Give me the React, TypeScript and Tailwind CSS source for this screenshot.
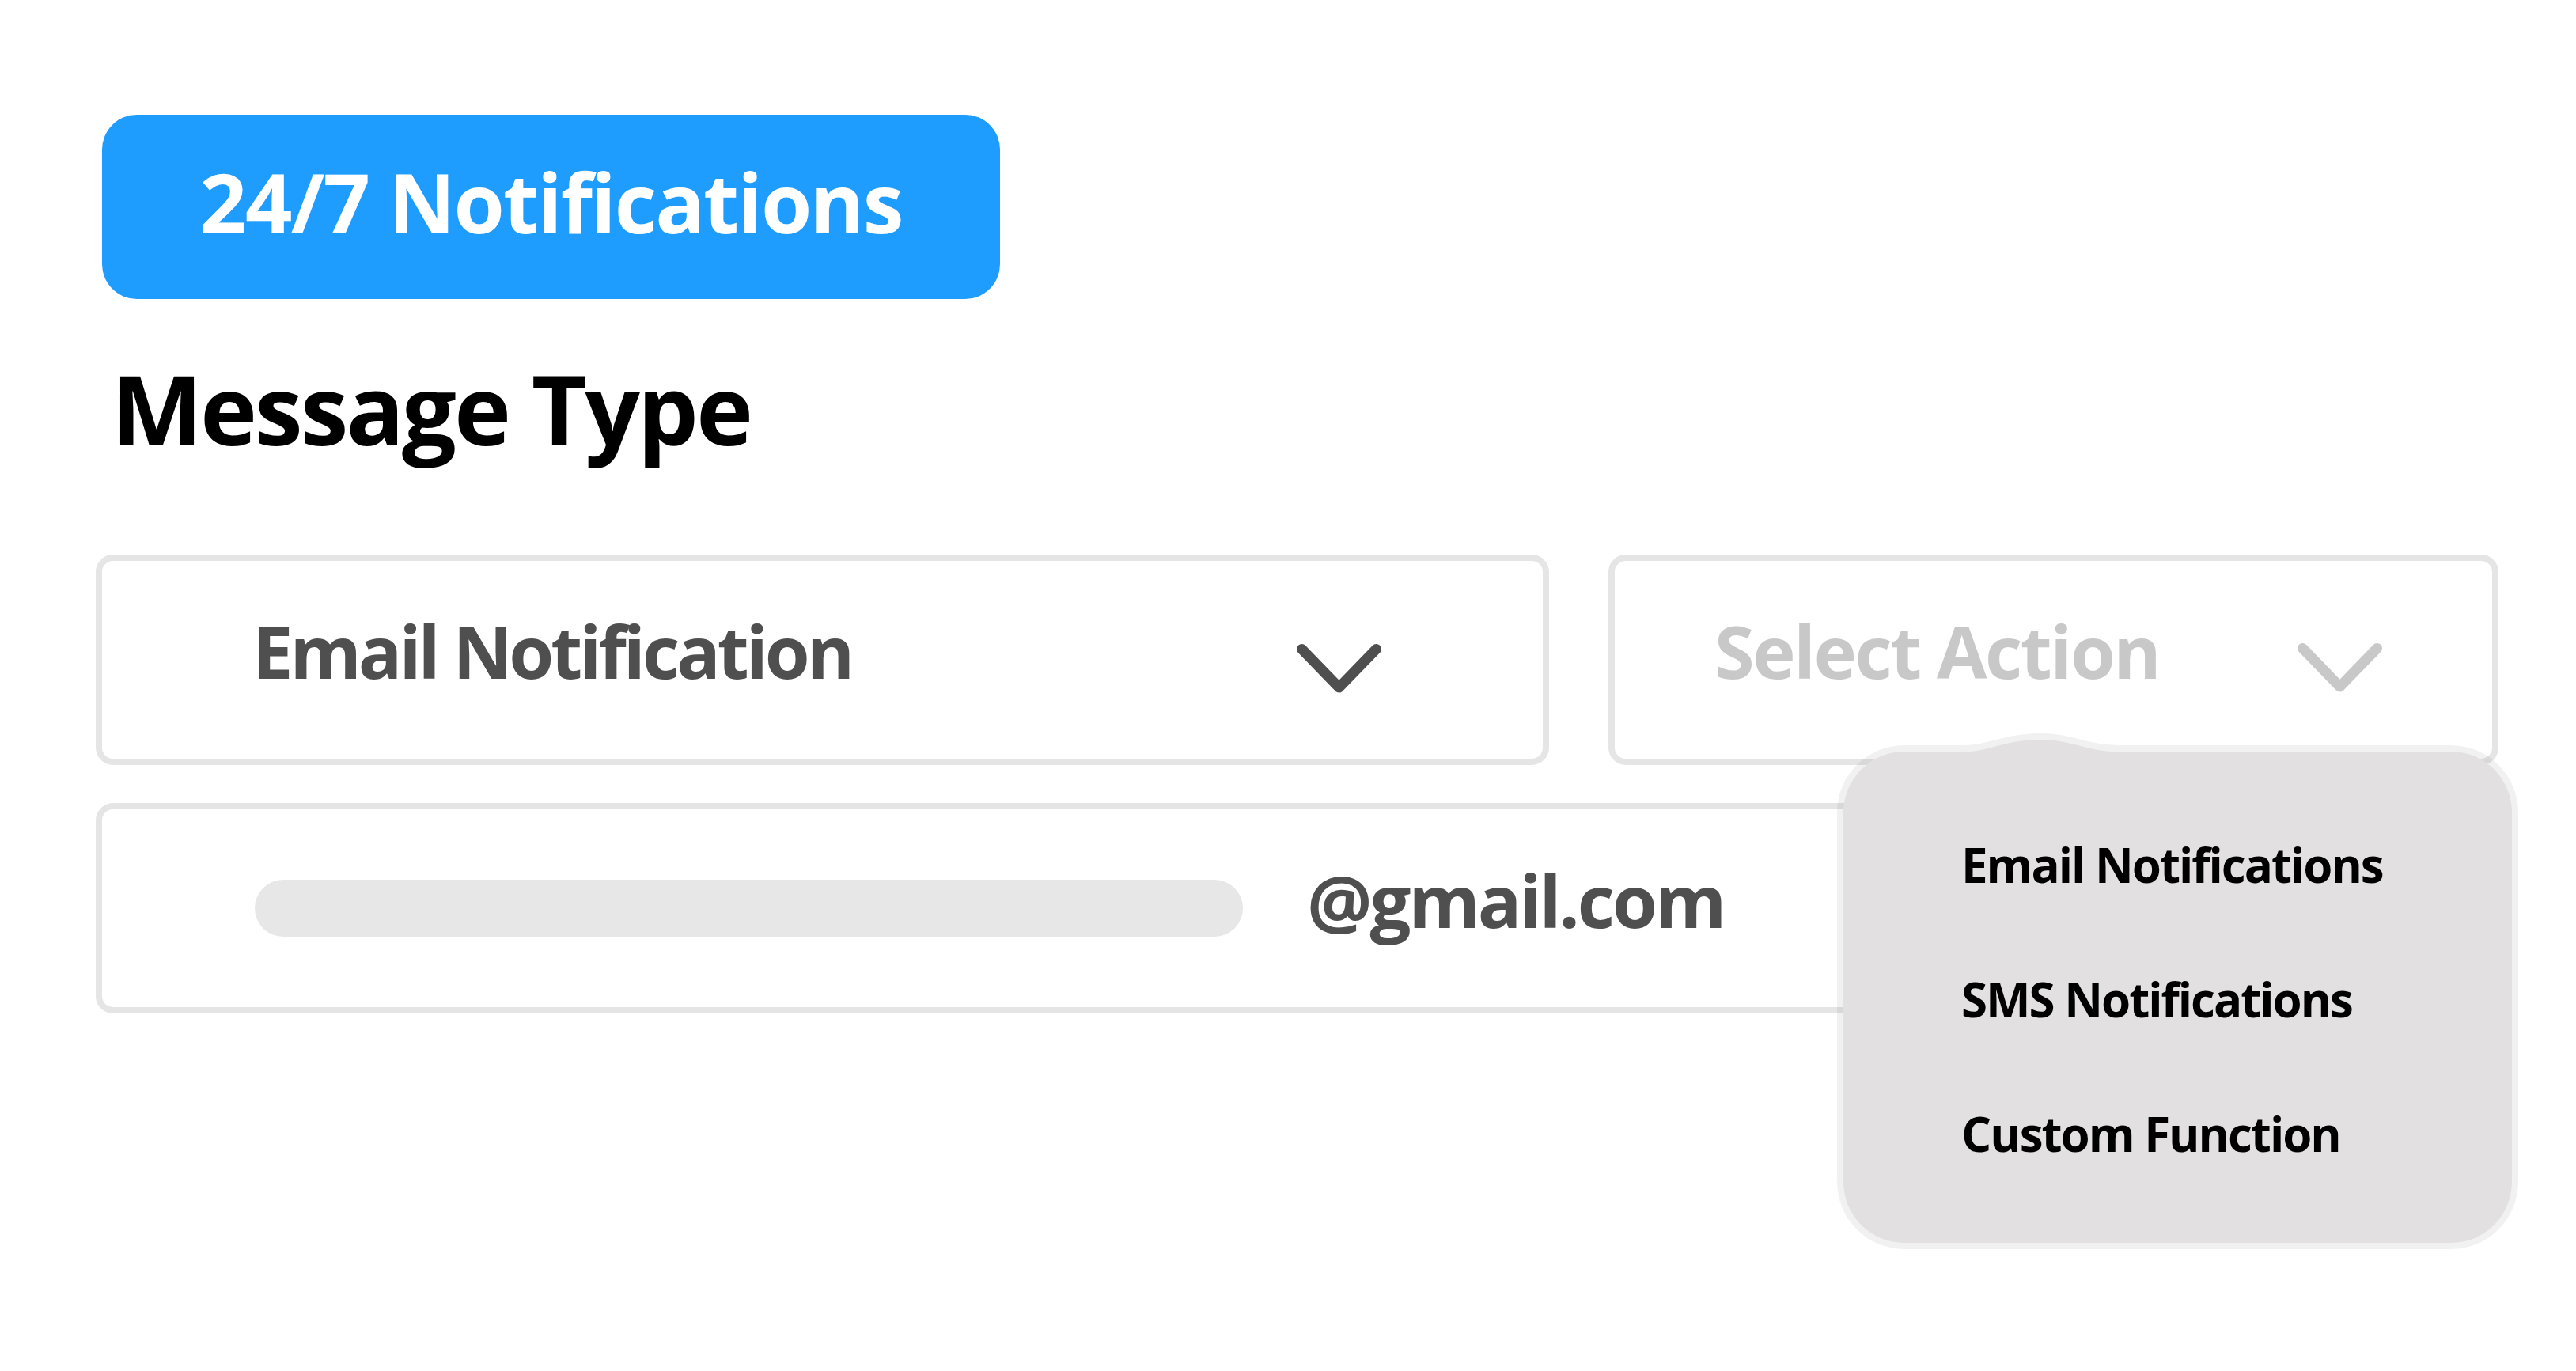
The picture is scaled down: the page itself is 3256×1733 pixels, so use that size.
import React from "react";

function Chevron({ color }: { color: string }) {
  return (
    <svg width="107" height="62" viewBox="0 0 107 62" fill="none">
      <path
        d="M6.5 6.5 L53.5 55 L100.5 6.5"
        stroke={color}
        strokeWidth="13"
        strokeLinecap="round"
        strokeLinejoin="round"
      />
    </svg>
  );
}

const menuItems = ["Email Notifications", "SMS Notifications", "Custom Function"];

export default function App() {
  return (
    <div className="min-h-screen bg-white font-['Open_Sans',sans-serif]">
      <div className="relative ml-[121px] w-[3037px] pt-[145px]">
        {/* badge */}
        <div className="ml-[8px] flex h-[233px] w-[1135px] items-center justify-center rounded-[44px] bg-[#1e9dff] pb-[13px]">
          <span className="text-[104px] font-bold leading-none tracking-[-2px] text-white">
            24/7 Notifications
          </span>
        </div>

        <h1 className="ml-[20px] mt-[77px] text-[122px] font-bold leading-none tracking-[-3px] text-black">
          Message Type
        </h1>

        {/* selects */}
        <div className="mt-[124px] flex gap-[75px]">
          <div className="flex h-[266px] w-[1837px] items-start rounded-[22px] border-[8px] border-[#e5e5e5] bg-white">
            <span className="ml-[190px] mt-[68px] text-[92px] font-bold leading-none tracking-[-4px] text-[#4f4f4f]">
              Email Notification
            </span>
            <div className="ml-auto mr-[204px] mt-[105px]">
              <Chevron color="#4f4f4f" />
            </div>
          </div>
          <div className="flex h-[266px] w-[1125px] items-start rounded-[22px] border-[8px] border-[#e5e5e5] bg-white">
            <span className="ml-[126px] mt-[68px] text-[92px] font-bold leading-none tracking-[-2.5px] text-[#c8c8c8]">
              Select Action
            </span>
            <div className="ml-auto mr-[139px] mt-[104px]">
              <Chevron color="#c8c8c8" />
            </div>
          </div>
        </div>

        {/* email input */}
        <div className="mt-[48px] flex h-[266px] w-[3037px] items-start rounded-[22px] border-[8px] border-[#e5e5e5] bg-white">
          <div className="ml-[193px] mt-[89px] h-[72px] w-[1249px] rounded-full bg-[#e7e7e7]" />
          <span className="ml-[81px] mt-[69px] text-[92px] font-bold leading-none tracking-[-3px] text-[#4f4f4f]">
            @gmail.com
          </span>
        </div>

        {/* dropdown menu */}
        <div className="absolute left-[2201px] top-[942px] h-[637px] w-[861px] rounded-[85px] border-[8px] border-[rgba(0,0,0,0.055)] bg-[#e2e0e1] bg-clip-padding">
          <svg
            className="absolute left-[111px] top-[-30px]"
            width="240"
            height="30"
            viewBox="0 0 240 30"
          >
            <path d="M0 30 L0 22 L40 22 C72 22 92 7 140 7 C176 7 198 22 240 22 L240 30 Z" fill="#f1f1f1" />
            <path d="M0 30.5 L40 30.5 C72 30.5 92 15 140 15 C176 15 198 30.5 240 30.5 Z" fill="#e2e0e1" />
          </svg>
          <div className="flex flex-col gap-[110px] pl-[149px] pt-[113px]">
            {menuItems.map((item) => (
              <span key={item} className="text-[60px] font-bold leading-none tracking-[-2px] text-black">
                {item}
              </span>
            ))}
          </div>
        </div>
      </div>
    </div>
  );
}
